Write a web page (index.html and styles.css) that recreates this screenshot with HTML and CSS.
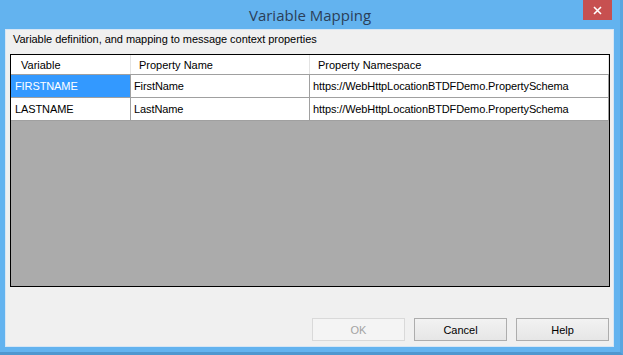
FILE: index.html
```html
<!DOCTYPE html>
<html>
<head>
<link rel="stylesheet" href="styles.css">
</head>
<body>
<div class="window">
  <div class="titlebar">
    <div class="spacer"></div>
    <div class="title">Variable Mapping</div>
    <div class="controls">
      <div class="close">
        <svg width="9" height="9" viewBox="0 0 9 9"><path d="M1 1L8 8M8 1L1 8" stroke="#fff" stroke-width="1.6"/></svg>
      </div>
    </div>
  </div>
  <div class="client">
    <div class="caption">Variable definition, and mapping to message context properties</div>
    <div class="grid">
      <div class="row head">
        <div class="cell c1">Variable</div>
        <div class="cell c2">Property Name</div>
        <div class="cell c3">Property Namespace</div>
      </div>
      <div class="row">
        <div class="cell c1 selected">FIRSTNAME</div>
        <div class="cell c2">FirstName</div>
        <div class="cell c3">https://WebHttpLocationBTDFDemo.PropertySchema</div>
      </div>
      <div class="row">
        <div class="cell c1">LASTNAME</div>
        <div class="cell c2">LastName</div>
        <div class="cell c3">https://WebHttpLocationBTDFDemo.PropertySchema</div>
      </div>
    </div>
    <div class="buttons">
      <button class="btn" disabled>OK</button>
      <button class="btn">Cancel</button>
      <button class="btn">Help</button>
    </div>
  </div>
</div>
</body>
</html>
```

FILE: styles.css
```css
html, body {
  margin: 0;
  padding: 0;
}

body {
  background-color: #63b3ef;
  width: 623px;
  height: 355px;
  overflow: hidden;
  font-family: "Liberation Sans", Arial, sans-serif;
  font-size: 11px;
  color: #000;
}

.window {
  display: flex;
  flex-direction: column;
  height: 355px;
  border-right: 3px solid #5aa6e0;
  box-sizing: border-box;
  border-bottom: 3px solid #4f97cf;
}

.titlebar {
  display: flex;
  height: 29px;
}

.spacer {
  width: 37px;
}

.title {
  flex: 1;
  text-align: center;
  font-family: "Open Sans", "Noto Sans", sans-serif;
  font-size: 15px;
  color: #2b3f59;
  line-height: 30px;
}

.controls {
  width: 37px;
}

.close {
  width: 29px;
  height: 20px;
  background-color: #c75050;
  display: flex;
  align-items: center;
  justify-content: center;
}

.client {
  margin: 0 6px 5px 5px;
  background-color: #f0f0f0;
  border: 1px solid #d6e6f5;
  flex: 1;
  display: flex;
  flex-direction: column;
  padding: 0 4px 0 4px;
}

.caption {
  height: 24px;
  line-height: 18px;
  padding-left: 3px;
  letter-spacing: -0.05px;
}

.grid {
  width: 598px;
  height: 231px;
  border: 1px solid #000;
  background-color: #ababab;
}

.row {
  display: flex;
  height: 22px;
  background-color: #fff;
  border-bottom: 1px solid #a0a0a0;
}

.row.head {
  height: 19px;
  border-bottom: 1px solid #a0a0a0;
}

.cell {
  box-sizing: border-box;
  line-height: 23px;
  padding-left: 3px;
  border-right: 1px solid #a0a0a0;
  white-space: nowrap;
  overflow: hidden;
  letter-spacing: -0.1px;
}

.head .cell {
  line-height: 20px;
  padding-left: 8px;
  border-right: 1px solid #e3e3e3;
  letter-spacing: 0;
}

.head .c1 {
  padding-left: 10px;
}

.c1 {
  width: 120px;
  padding-left: 4px;
}

.c2 {
  width: 179px;
}

.c3 {
  flex: 1;
}

.selected {
  background-color: #3399ff;
  color: #fff;
}

.buttons {
  display: flex;
  justify-content: flex-end;
  gap: 9px;
  margin-top: 31px;
}

.btn {
  width: 93px;
  height: 23px;
  font-family: "Liberation Sans", Arial, sans-serif;
  font-size: 11px;
  color: #000;
  background: linear-gradient(#f2f2f2, #e6e6e6);
  border: 1px solid #adadad;
  border-radius: 0;
  padding: 0;
}

.btn:disabled {
  color: #a3a3a3;
  background: #f4f4f4;
  border-color: #d9d9d9;
}
```
